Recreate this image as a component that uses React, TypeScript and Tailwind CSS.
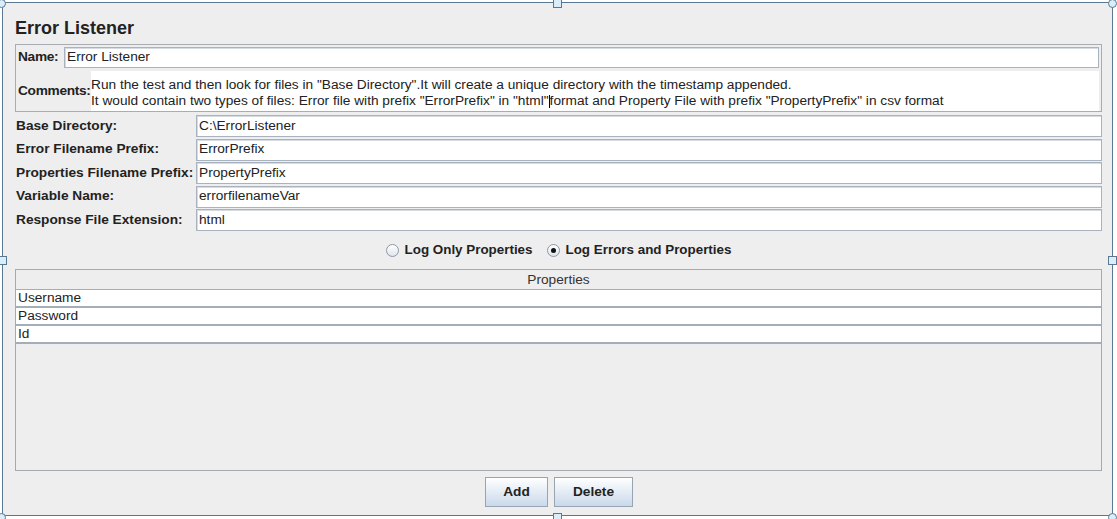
import React from "react";

const font = "font-['Liberation_Sans',Arial,sans-serif]";

const fields = [
  { label: "Base Directory:", value: "C:\\ErrorListener" },
  { label: "Error Filename Prefix:", value: "ErrorPrefix" },
  { label: "Properties Filename Prefix:", value: "PropertyPrefix" },
  { label: "Variable Name:", value: "errorfilenameVar" },
  { label: "Response File Extension:", value: "html" },
];

const rows = ["Username", "Password", "Id"];

function TextField({ value, className = "" }: { value: string; className?: string }) {
  return (
    <div
      className={`flex items-center h-[21px] bg-white border border-[#a9b3c0] shadow-[inset_1px_1px_0_#d6dbe2] px-[2px] text-[13.7px] text-[#222] ${className}`}
    >
      {value}
    </div>
  );
}

function Radio({ checked }: { checked?: boolean }) {
  return (
    <span className="w-[13px] h-[13px] rounded-full border border-[#8b98a8] bg-gradient-to-b from-white to-[#dfe5ec] flex items-center justify-center">
      {checked && <span className="w-[5px] h-[5px] rounded-full bg-[#111]" />}
    </span>
  );
}

function Handle({ className }: { className: string }) {
  return <span className={`absolute w-[9px] h-[9px] border border-[#5b7893] bg-[#d9eef8] ${className}`} />;
}

export default function App() {
  return (
    <div className={`relative w-[1117px] h-[519px] bg-white ${font}`}>
      <div className="ml-[2px] mt-[2px] w-[1111px] h-[514px] border border-[#5b7893] bg-[#eeeeee] pl-[12px] pr-[10px] flex flex-col">
        <h1 className="mt-[14px] h-[22px] leading-[22px] text-[18px] font-bold text-[#222]">Error Listener</h1>

        <div className="mt-[5px] border border-[#a8adb3] px-[2px] pt-[2px] pb-0 flex flex-col">
          <div className="flex items-center h-[21px]">
            <span className="w-[46px] text-[13.7px] font-bold text-[#222] tracking-[-0.3px]">Name:</span>
            <TextField value="Error Listener" className="flex-1" />
          </div>
          <div className="flex items-center mt-[3px] h-[40px]">
            <span className="w-[73px] text-[13.7px] font-bold text-[#222] tracking-[-0.3px]">Comments:</span>
            <div className="flex-1 h-full bg-white text-[13.7px] leading-[16px] text-[#222] pt-[6px] whitespace-nowrap overflow-hidden">
              <div>Run the test and then look for files in "Base Directory".It will create a unique directory with the timestamp appended.</div>
              <div>
                It would contain two types of files: Error file with prefix "ErrorPrefix" in "html"
                <span className="inline-block w-px h-[13px] bg-black align-middle" />
                format and Property File with prefix "PropertyPrefix" in csv format
              </div>
            </div>
          </div>
        </div>

        <div className="mt-[3px] flex flex-col gap-[1.5px]">
          {fields.map((f) => (
            <div key={f.label} className="flex items-center h-[22px]">
              <span className="w-[181px] pl-px text-[13.7px] font-bold text-[#222]">{f.label}</span>
              <TextField value={f.value} className="flex-1 h-[22px]" />
            </div>
          ))}
        </div>

        <div className="h-[38px] pt-px flex items-center justify-center gap-[14px] text-[13.4px] font-bold text-[#222]">
          <label className="flex items-center gap-[6px]">
            <Radio />
            Log Only Properties
          </label>
          <label className="flex items-center gap-[6px]">
            <Radio checked />
            Log Errors and Properties
          </label>
        </div>

        <div className="h-[202px] border border-[#a4aab2] flex flex-col">
          <div className="h-[20px] pt-[2px] border-b border-[#a4aeb9] flex items-center justify-center text-[13.7px] text-[#333]">
            Properties
          </div>
          {rows.map((r) => (
            <div key={r} className="h-[18px] bg-white border-b-2 border-[#a4aeb9] flex items-center pl-[2px] text-[13.7px] text-[#222]">
              {r}
            </div>
          ))}
        </div>

        <div className="mt-[6px] flex justify-center gap-[6px] pl-px">
          <button className="w-[63px] h-[30px] border border-[#98a4b2] bg-gradient-to-b from-white to-[#c9d9ea] text-[13.7px] font-bold text-[#222]">
            Add
          </button>
          <button className="w-[79px] h-[30px] border border-[#98a4b2] bg-gradient-to-b from-white to-[#c9d9ea] text-[13.7px] font-bold text-[#222]">
            Delete
          </button>
        </div>
      </div>

      <Handle className="left-[-3px] top-[-3px] rounded-full" />
      <Handle className="left-[553px] top-[-3px]" />
      <Handle className="left-[1108px] top-[-3px] rounded-full" />
      <Handle className="left-[-2px] top-[254px]" />
      <Handle className="left-[1108px] top-[254px]" />
      <Handle className="left-[-3px] top-[511px] rounded-full" />
      <Handle className="left-[553px] top-[511px]" />
      <Handle className="left-[1108px] top-[511px] rounded-full" />
    </div>
  );
}
